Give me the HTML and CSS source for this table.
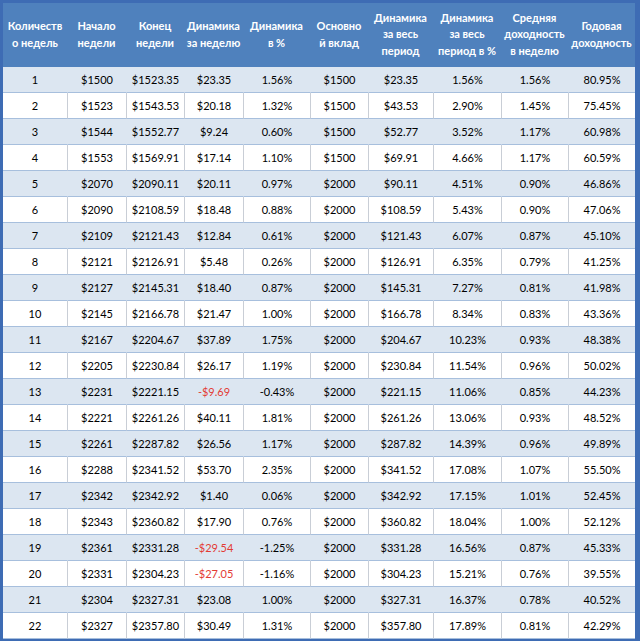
FILE: index.html
```html
<!DOCTYPE html>
<html lang="ru">
<head>
<meta charset="utf-8">
<title>Доходность</title>
<link rel="stylesheet" href="styles.css">
</head>
<body>
<div class="frame">
<table class="grid">
<colgroup>
<col class="c64"><col class="c59"><col class="c58"><col class="c59"><col class="c67"><col class="c58"><col class="c65"><col class="c68"><col class="c67"><col class="c67">
</colgroup>
<thead>
<tr>
<th>Количеств<br>о недель</th>
<th>Начало<br>недели</th>
<th>Конец<br>недели</th>
<th>Динамика<br>за неделю</th>
<th>Динамика<br>в %</th>
<th>Основно<br>й вклад</th>
<th>Динамика<br>за весь<br>период</th>
<th>Динамика<br>за весь<br>период в %</th>
<th>Средняя<br>доходность<br>в неделю</th>
<th>Годовая<br>доходность</th>
</tr>
</thead>
<tbody>
<tr><td>1</td><td>$1500</td><td>$1523.35</td><td>$23.35</td><td>1.56%</td><td>$1500</td><td>$23.35</td><td>1.56%</td><td>1.56%</td><td>80.95%</td></tr>
<tr><td>2</td><td>$1523</td><td>$1543.53</td><td>$20.18</td><td>1.32%</td><td>$1500</td><td>$43.53</td><td>2.90%</td><td>1.45%</td><td>75.45%</td></tr>
<tr><td>3</td><td>$1544</td><td>$1552.77</td><td>$9.24</td><td>0.60%</td><td>$1500</td><td>$52.77</td><td>3.52%</td><td>1.17%</td><td>60.98%</td></tr>
<tr><td>4</td><td>$1553</td><td>$1569.91</td><td>$17.14</td><td>1.10%</td><td>$1500</td><td>$69.91</td><td>4.66%</td><td>1.17%</td><td>60.59%</td></tr>
<tr><td>5</td><td>$2070</td><td>$2090.11</td><td>$20.11</td><td>0.97%</td><td>$2000</td><td>$90.11</td><td>4.51%</td><td>0.90%</td><td>46.86%</td></tr>
<tr><td>6</td><td>$2090</td><td>$2108.59</td><td>$18.48</td><td>0.88%</td><td>$2000</td><td>$108.59</td><td>5.43%</td><td>0.90%</td><td>47.06%</td></tr>
<tr><td>7</td><td>$2109</td><td>$2121.43</td><td>$12.84</td><td>0.61%</td><td>$2000</td><td>$121.43</td><td>6.07%</td><td>0.87%</td><td>45.10%</td></tr>
<tr><td>8</td><td>$2121</td><td>$2126.91</td><td>$5.48</td><td>0.26%</td><td>$2000</td><td>$126.91</td><td>6.35%</td><td>0.79%</td><td>41.25%</td></tr>
<tr><td>9</td><td>$2127</td><td>$2145.31</td><td>$18.40</td><td>0.87%</td><td>$2000</td><td>$145.31</td><td>7.27%</td><td>0.81%</td><td>41.98%</td></tr>
<tr><td>10</td><td>$2145</td><td>$2166.78</td><td>$21.47</td><td>1.00%</td><td>$2000</td><td>$166.78</td><td>8.34%</td><td>0.83%</td><td>43.36%</td></tr>
<tr><td>11</td><td>$2167</td><td>$2204.67</td><td>$37.89</td><td>1.75%</td><td>$2000</td><td>$204.67</td><td>10.23%</td><td>0.93%</td><td>48.38%</td></tr>
<tr><td>12</td><td>$2205</td><td>$2230.84</td><td>$26.17</td><td>1.19%</td><td>$2000</td><td>$230.84</td><td>11.54%</td><td>0.96%</td><td>50.02%</td></tr>
<tr><td>13</td><td>$2231</td><td>$2221.15</td><td class="neg">-$9.69</td><td>-0.43%</td><td>$2000</td><td>$221.15</td><td>11.06%</td><td>0.85%</td><td>44.23%</td></tr>
<tr><td>14</td><td>$2221</td><td>$2261.26</td><td>$40.11</td><td>1.81%</td><td>$2000</td><td>$261.26</td><td>13.06%</td><td>0.93%</td><td>48.52%</td></tr>
<tr><td>15</td><td>$2261</td><td>$2287.82</td><td>$26.56</td><td>1.17%</td><td>$2000</td><td>$287.82</td><td>14.39%</td><td>0.96%</td><td>49.89%</td></tr>
<tr><td>16</td><td>$2288</td><td>$2341.52</td><td>$53.70</td><td>2.35%</td><td>$2000</td><td>$341.52</td><td>17.08%</td><td>1.07%</td><td>55.50%</td></tr>
<tr><td>17</td><td>$2342</td><td>$2342.92</td><td>$1.40</td><td>0.06%</td><td>$2000</td><td>$342.92</td><td>17.15%</td><td>1.01%</td><td>52.45%</td></tr>
<tr><td>18</td><td>$2343</td><td>$2360.82</td><td>$17.90</td><td>0.76%</td><td>$2000</td><td>$360.82</td><td>18.04%</td><td>1.00%</td><td>52.12%</td></tr>
<tr><td>19</td><td>$2361</td><td>$2331.28</td><td class="neg">-$29.54</td><td>-1.25%</td><td>$2000</td><td>$331.28</td><td>16.56%</td><td>0.87%</td><td>45.33%</td></tr>
<tr><td>20</td><td>$2331</td><td>$2304.23</td><td class="neg">-$27.05</td><td>-1.16%</td><td>$2000</td><td>$304.23</td><td>15.21%</td><td>0.76%</td><td>39.55%</td></tr>
<tr><td>21</td><td>$2304</td><td>$2327.31</td><td>$23.08</td><td>1.00%</td><td>$2000</td><td>$327.31</td><td>16.37%</td><td>0.78%</td><td>40.52%</td></tr>
<tr><td>22</td><td>$2327</td><td>$2357.80</td><td>$30.49</td><td>1.31%</td><td>$2000</td><td>$357.80</td><td>17.89%</td><td>0.81%</td><td>42.29%</td></tr>
</tbody>
</table>
</div>
</body>
</html>
```
FILE: styles.css
```css
html, body {
  margin: 0;
  padding: 0;
  background: #3e6cb4;
}
.frame {
  width: 640px;
  height: 641px;
  box-sizing: border-box;
  padding: 3px 5px 2px 3px;
  background: #3e6cb4;
  overflow: hidden;
}
.grid {
  width: 632px;
  table-layout: fixed;
  border-collapse: separate;
  border-spacing: 0;
  font-family: Lato, "Noto Sans", "Liberation Sans", sans-serif;
  font-size: 11px;
  color: #000;
}
.c64 { width: 64px; }
.c59 { width: 59px; }
.c58 { width: 58px; }
.c65 { width: 65px; }
.c67 { width: 67px; }
.c68 { width: 68px; }
.grid thead tr {
  height: 64px;
}
.grid th {
  background: #4f81bd;
  color: #fff;
  font-weight: bold;
  font-size: 11px;
  line-height: 16.5px;
  text-align: center;
  vertical-align: middle;
  padding: 0;
  white-space: nowrap;
  border-bottom: 1px solid #4f81bd;
}
.grid tbody tr {
  height: 26px;
}
.grid td {
  padding: 0;
  text-align: center;
  vertical-align: middle;
  line-height: 14px;
  white-space: nowrap;
  border-bottom: 1px solid #a7bfdd;
  border-left: 1px solid #c9ced6;
  background: #fff;
}
.grid td:first-child {
  border-left: 0;
}
.grid tbody tr:nth-child(odd) td {
  background: #dce6f1;
  border-left-color: #dce6f1;
}
.grid td.neg {
  color: #e33b34;
}
```
